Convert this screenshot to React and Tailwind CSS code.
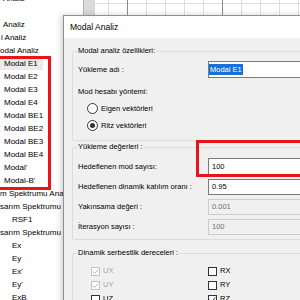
import React from 'react';

const listRows = [
  { text: 'Analiz', cls: 'pl-[3px]' },
  { text: '', cls: '' },
  { text: 'Analiz', cls: 'pl-[3px]' },
  { text: 'l Analiz', cls: 'pl-[1px]' },
  { text: 'odal Analiz', cls: 'pl-0' },
  { text: 'Modal E1', cls: 'pl-0', selected: true },
  { text: 'Modal E2', cls: 'pl-[4px]' },
  { text: 'Modal E3', cls: 'pl-[4px]' },
  { text: 'Modal E4', cls: 'pl-[4px]' },
  { text: 'Modal BE1', cls: 'pl-[4px]' },
  { text: 'Modal BE2', cls: 'pl-[4px]' },
  { text: 'Modal BE3', cls: 'pl-[4px]' },
  { text: 'Modal BE4', cls: 'pl-[4px]' },
  { text: "Modal'", cls: 'pl-[4px]' },
  { text: "Modal-B'", cls: 'pl-[4px]' },
  { text: 'm Spektrumu Analizi', cls: 'pl-0' },
  { text: 'sarım Spektrumu', cls: 'pl-0' },
  { text: 'RSF1', cls: 'pl-[12px]' },
  { text: 'sarım Spektrumu', cls: 'pl-0' },
  { text: 'Ex', cls: 'pl-[12px]' },
  { text: 'Ey', cls: 'pl-[12px]' },
  { text: "Ex'", cls: 'pl-[12px]' },
  { text: "Ey'", cls: 'pl-[12px]' },
  { text: 'ExB', cls: 'pl-[12px]' },
];

const gridX = [108, 127, 146, 165, 184, 203, 222, 241, 260, 279, 298];

const Field = ({ label, value, disabled, first }) => (
  <div className={`flex items-center ${first ? 'h-[17px]' : 'h-[16px] mt-[4px]'}`}>
    <div className="w-[130px] shrink-0 whitespace-nowrap">{label}</div>
    <div
      className={`h-full w-[120px] shrink-0 flex items-center border ${
        disabled ? 'border-[#cccccc] bg-[#f0f0f0] text-[#6d6d6d] pl-[3px]' : 'border-[#7a7a7a] bg-white pl-[3px]'
      }`}
    >
      {value}
    </div>
  </div>
);

const Radio = ({ label, checked }) => (
  <div className="flex items-center h-[13px] mt-[4px] pl-[9px]">
    <div className="w-[11px] h-[11px] rounded-full border border-[#333333] bg-white flex items-center justify-center">
      {checked && <div className="w-[5px] h-[5px] rounded-full bg-[#333333]" />}
    </div>
    <span className="ml-[3px]">{label}</span>
  </div>
);

const Check = ({ label, checked, disabled }) => (
  <div className="flex items-center">
    <div
      className={`w-[9px] h-[9px] border bg-white flex items-center justify-center ${
        disabled ? 'border-[#c4c4c4]' : 'border-[#333333]'
      }`}
    >
      {checked && (
        <svg width="7" height="7" viewBox="0 0 7 7">
          <polyline
            points="0.8,3.6 2.7,5.5 6.3,1.4"
            fill="none"
            stroke={disabled ? '#b8b8b8' : '#333333'}
            strokeWidth="1"
          />
        </svg>
      )}
    </div>
    <span className={`ml-[3px] ${disabled ? 'text-[#a6a6a6]' : ''}`}>{label}</span>
  </div>
);

export default function App() {
  return (
    <div className="relative w-[300px] h-[300px] overflow-hidden bg-white text-black font-['Liberation_Sans',Arial,sans-serif]">
      {/* background: tree list + drawing canvas */}
      <div className="flex h-full">
        <div className="w-[83px] shrink-0 overflow-hidden text-[8px]">
          <div className="-mt-[8px]">
            {listRows.map((r, i) => (
              <div key={i} className={`h-[13px] leading-[13px] whitespace-nowrap ${r.cls}`}>
                {r.selected ? (
                  <span className="inline-block bg-[#ebebeb] pl-[4px] pr-[5px]">{r.text}</span>
                ) : (
                  r.text
                )}
              </div>
            ))}
          </div>
        </div>
        <div className="w-[12px] shrink-0 bg-[#dadada] border-l border-[#b4b4b4]" />
        <div className="flex-1 bg-white">
          <svg width="205" height="300" viewBox="95 0 205 300" className="block">
            <line x1="95" y1="3.5" x2="300" y2="3.5" stroke="#dedede" />
            {gridX.map((x) => (
              <line
                key={x}
                x1={x + 0.5}
                y1="0"
                x2={x + 0.5}
                y2="300"
                stroke={x === 127 || x === 222 ? '#8c8c8c' : '#dedede'}
              />
            ))}
          </svg>
        </div>
      </div>

      {/* Modal Analiz dialog */}
      <div className="absolute left-[63px] top-[15px] w-[250px] h-[300px] border border-[#8f8f8f] bg-[#f0f0f0] shadow-[-2px_0_6px_rgba(0,0,0,0.18)]">
        <div className="h-[22px] bg-white flex items-center pl-[6px] text-[8.5px]">Modal Analiz</div>
        <div className="pt-[8px] pl-[8px] text-[7.5px]">
          <fieldset className="w-[250px] border border-[#dcdcdc] rounded-[2px] pl-[5px] pt-[5px] pb-[8px]">
            <legend className="leading-[10px] px-[1px] -ml-[1px]">Modal analiz özellikleri:</legend>
            <div className="flex items-center h-[17px]">
              <div className="w-[130px] shrink-0">Yükleme adı :</div>
              <div className="h-full w-[120px] shrink-0 flex items-center border border-[#7a7a7a] bg-white">
                <span className="leading-[11px] bg-[#1a6fd8] text-white px-[1px]">Modal E1</span>
              </div>
            </div>
            <div className="h-[12px] leading-[12px] mt-[8px]">Mod hesabı yöntemi:</div>
            <Radio label="Eigen vektörleri" />
            <Radio label="Ritz vektörleri" checked />
          </fieldset>

          <fieldset className="mt-[1px] w-[250px] border border-[#dcdcdc] rounded-[2px] pl-[5px] pt-[6px] pb-[4px]">
            <legend className="leading-[10px] px-[1px] -ml-[1px]">Yükleme değerleri :</legend>
            <Field label="Hedeflenen mod sayısı:" value="100" first />
            <Field label="Hedeflenen dinamik katılım oranı :" value="0.95" />
            <Field label="Yakınsama değeri :" value="0.001" disabled />
            <Field label="İterasyon sayısı :" value="100" disabled />
          </fieldset>

          <fieldset className="mt-[8px] w-[250px] border border-[#dcdcdc] rounded-[2px] pl-[5px] pt-[7px] pb-[8px]">
            <legend className="leading-[10px] px-[1px] -ml-[1px]">Dinamik serbestlik dereceleri :</legend>
            <div className="grid grid-cols-[117px_1fr] gap-y-[2px] pl-[13px]">
              <div className="h-[12px] flex items-center"><Check label="UX" checked disabled /></div>
              <div className="h-[12px] flex items-center"><Check label="RX" /></div>
              <div className="h-[12px] flex items-center"><Check label="UY" checked disabled /></div>
              <div className="h-[12px] flex items-center"><Check label="RY" /></div>
              <div className="h-[12px] flex items-center"><Check label="UZ" /></div>
              <div className="h-[12px] flex items-center"><Check label="RZ" checked /></div>
            </div>
          </fieldset>
        </div>
      </div>

      {/* red annotation boxes */}
      <div className="absolute left-[-5px] top-[56px] w-[56px] h-[134px] border-[3px] border-[#e8141c]" />
      <div className="absolute left-[196px] top-[140px] w-[120px] h-[37px] border-[3px] border-[#e8141c]" />
    </div>
  );
}
